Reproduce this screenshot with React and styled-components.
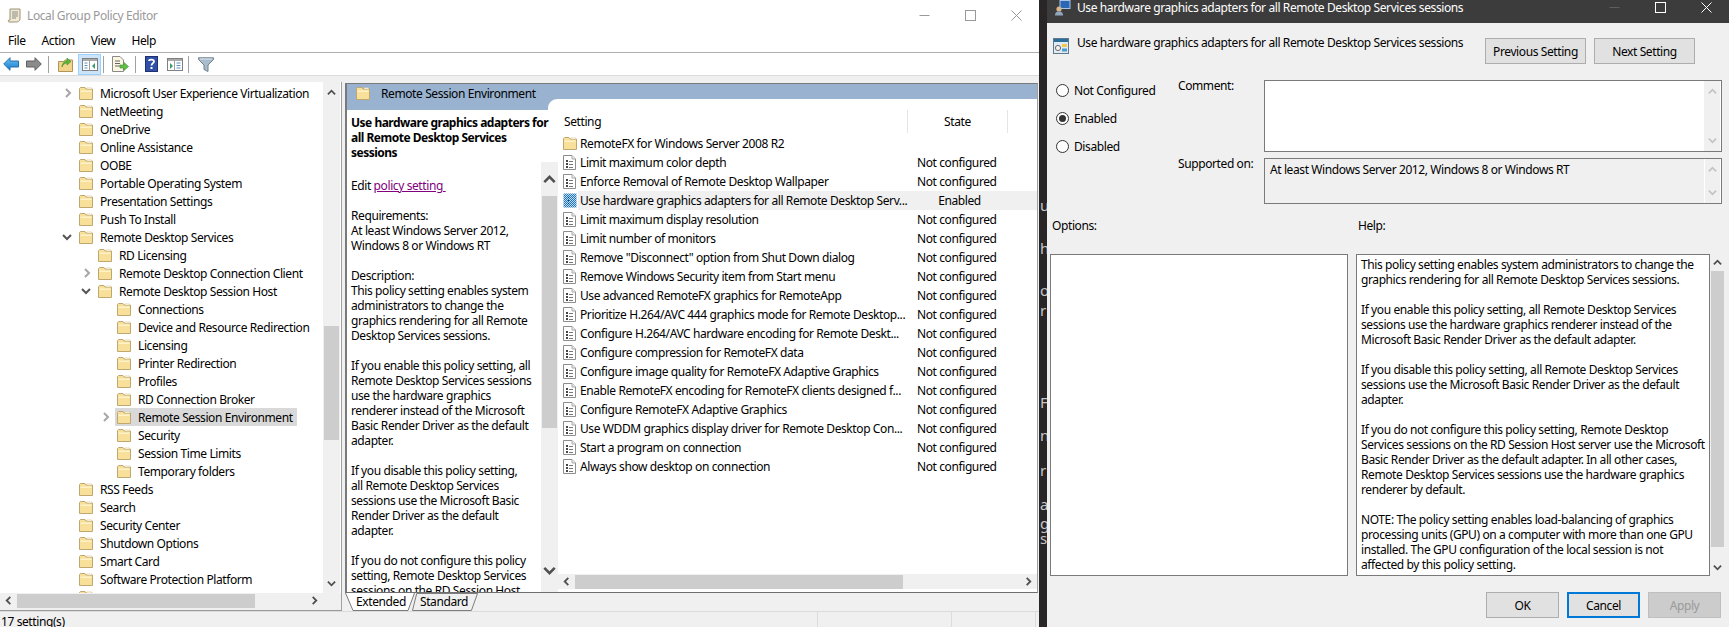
import React from 'react';
import styled, { createGlobalStyle } from 'styled-components';

const GlobalStyle = createGlobalStyle`
  html, body {
    margin: 0;
    background: #2a2526;
    overflow: hidden;
  }
  * {
    box-sizing: border-box;
  }
`;

// tree data: level, name, chevron ('open' | 'closed')
const treeItems = [
  { level: 0, name: 'Microsoft User Experience Virtualization', chevron: 'closed' },
  { level: 0, name: 'NetMeeting' },
  { level: 0, name: 'OneDrive' },
  { level: 0, name: 'Online Assistance' },
  { level: 0, name: 'OOBE' },
  { level: 0, name: 'Portable Operating System' },
  { level: 0, name: 'Presentation Settings' },
  { level: 0, name: 'Push To Install' },
  { level: 0, name: 'Remote Desktop Services', chevron: 'open' },
  { level: 1, name: 'RD Licensing' },
  { level: 1, name: 'Remote Desktop Connection Client', chevron: 'closed' },
  { level: 1, name: 'Remote Desktop Session Host', chevron: 'open' },
  { level: 2, name: 'Connections' },
  { level: 2, name: 'Device and Resource Redirection' },
  { level: 2, name: 'Licensing' },
  { level: 2, name: 'Printer Redirection' },
  { level: 2, name: 'Profiles' },
  { level: 2, name: 'RD Connection Broker' },
  { level: 2, name: 'Remote Session Environment', chevron: 'closed', selected: true },
  { level: 2, name: 'Security' },
  { level: 2, name: 'Session Time Limits' },
  { level: 2, name: 'Temporary folders' },
  { level: 0, name: 'RSS Feeds' },
  { level: 0, name: 'Search' },
  { level: 0, name: 'Security Center' },
  { level: 0, name: 'Shutdown Options' },
  { level: 0, name: 'Smart Card' },
  { level: 0, name: 'Software Protection Platform' },
  { level: 0, name: '' },
];

const settings = [
  { name: 'RemoteFX for Windows Server 2008 R2', state: '', folder: true },
  { name: 'Limit maximum color depth', state: 'Not configured' },
  { name: 'Enforce Removal of Remote Desktop Wallpaper', state: 'Not configured' },
  { name: 'Use hardware graphics adapters for all Remote Desktop Serv...', state: 'Enabled', selected: true },
  { name: 'Limit maximum display resolution', state: 'Not configured' },
  { name: 'Limit number of monitors', state: 'Not configured' },
  { name: 'Remove "Disconnect" option from Shut Down dialog', state: 'Not configured' },
  { name: 'Remove Windows Security item from Start menu', state: 'Not configured' },
  { name: 'Use advanced RemoteFX graphics for RemoteApp', state: 'Not configured' },
  { name: 'Prioritize H.264/AVC 444 graphics mode for Remote Desktop...', state: 'Not configured' },
  { name: 'Configure H.264/AVC hardware encoding for Remote Deskt...', state: 'Not configured' },
  { name: 'Configure compression for RemoteFX data', state: 'Not configured' },
  { name: 'Configure image quality for RemoteFX Adaptive Graphics', state: 'Not configured' },
  { name: 'Enable RemoteFX encoding for RemoteFX clients designed f...', state: 'Not configured' },
  { name: 'Configure RemoteFX Adaptive Graphics', state: 'Not configured' },
  { name: 'Use WDDM graphics display driver for Remote Desktop Con...', state: 'Not configured' },
  { name: 'Start a program on connection', state: 'Not configured' },
  { name: 'Always show desktop on connection', state: 'Not configured' },
];

const descLines = [
  'Requirements:',
  'At least Windows Server 2012,',
  'Windows 8 or Windows RT',
  '',
  'Description:',
  'This policy setting enables system',
  'administrators to change the',
  'graphics rendering for all Remote',
  'Desktop Services sessions.',
  '',
  'If you enable this policy setting, all',
  'Remote Desktop Services sessions',
  'use the hardware graphics',
  'renderer instead of the Microsoft',
  'Basic Render Driver as the default',
  'adapter.',
  '',
  'If you disable this policy setting,',
  'all Remote Desktop Services',
  'sessions use the Microsoft Basic',
  'Render Driver as the default',
  'adapter.',
  '',
  'If you do not configure this policy',
  'setting, Remote Desktop Services',
  'sessions on the RD Session Host',
];

const helpLines = [
  'This policy setting enables system administrators to change the',
  'graphics rendering for all Remote Desktop Services sessions.',
  '',
  'If you enable this policy setting, all Remote Desktop Services',
  'sessions use the hardware graphics renderer instead of the',
  'Microsoft Basic Render Driver as the default adapter.',
  '',
  'If you disable this policy setting, all Remote Desktop Services',
  'sessions use the Microsoft Basic Render Driver as the default',
  'adapter.',
  '',
  'If you do not configure this policy setting, Remote Desktop',
  'Services sessions on the RD Session Host server use the Microsoft',
  'Basic Render Driver as the default adapter. In all other cases,',
  'Remote Desktop Services sessions use the hardware graphics',
  'renderer by default.',
  '',
  'NOTE: The policy setting enables load-balancing of graphics',
  'processing units (GPU) on a computer with more than one GPU',
  'installed. The GPU configuration of the local session is not',
  'affected by this policy setting.',
];

const stripGlyphs = [
  { top: 196, text: 'us' },
  { top: 239, text: 'h' },
  { top: 281, text: 'oi' },
  { top: 301, text: 'r' },
  { top: 393, text: 'F' },
  { top: 426, text: 'na' },
  { top: 461, text: 'r' },
  { top: 495, text: 'a' },
  { top: 514, text: 'g' },
  { top: 529, text: 's' },
];

/* ---------- drawings ---------- */

function FolderIcon() {
  return (
    <svg width="14" height="13" viewBox="0 0 14 13" style={{ flex: 'none' }}>
      <path d="M.5 12.5V1.5L1.5.5H6L7 2H13.5V12.5Z" fill="#f8e09a" stroke="#bfa86f" />
      <path d="M1.5 3.5H12.5V5H1.5Z" fill="#fdf2c8" />
      <path d="M8 .8H12.5V2H8Z" fill="#fff" stroke="#d5c79c" strokeWidth=".5" />
    </svg>
  );
}

function PolicyIcon({ selected }) {
  if (selected) {
    return (
      <svg width="14" height="15" viewBox="0 0 14 15" style={{ flex: 'none' }}>
        <defs>
          <pattern id="dither" width="2" height="2" patternUnits="userSpaceOnUse">
            <rect width="2" height="2" fill="#1f74bb" />
            <rect width="1" height="1" fill="#bcdcf2" />
            <rect x="1" y="1" width="1" height="1" fill="#bcdcf2" />
          </pattern>
        </defs>
        <rect x="0.5" y="0.5" width="13" height="14" fill="url(#dither)" />
        <path d="M5 4h1v1H5zM5 7h1v1H5zM5 10h1v1H5z" fill="#10365c" />
      </svg>
    );
  }
  return (
    <svg width="13" height="15" viewBox="0 0 13 15" style={{ flex: 'none' }}>
      <path d="M.5.5H9L12.5 4V14.5H.5Z" fill="#fff" stroke="#8d8d8d" />
      <path d="M9 .5V4H12.5" fill="#eee" stroke="#a8a8a8" />
      <path d="M3 5h2v2H3zM3 8h2v2H3zM3 11h2v2H3z" fill="#444" />
      <path d="M6 6h4v1H6zM6 9h4v1H6zM6 12h4v1H6z" fill="#777" />
    </svg>
  );
}

function Chevron({ dir = 'down', color = '#505050', size = 9, weight = 2 }) {
  const turn = { down: 0, up: 180, left: 90, right: -90 }[dir];
  return (
    <svg
      width={size}
      height={size}
      viewBox="0 0 10 10"
      style={{ transform: `rotate(${turn}deg)`, flex: 'none', display: 'block' }}
    >
      <path d="M1 3L5 7L9 3" fill="none" stroke={color} strokeWidth={weight} />
    </svg>
  );
}

function AppIcon() {
  return (
    <svg width="15" height="15" viewBox="0 0 15 15">
      <path d="M3 1H13V11C13 13 11 14 9 14H2C1 14 1 12 2 12H3Z" fill="#f1ead2" stroke="#9a927a" />
      <path d="M5 4H11M5 6H11M5 8H11M5 10H9" stroke="#8a8a8a" />
    </svg>
  );
}

function BackIcon() {
  return (
    <svg width="16" height="14" viewBox="0 0 16 14" style={{ display: 'block' }}>
      <defs>
        <linearGradient id="back" x1="0" y1="0" x2="0" y2="1">
          <stop offset="0" stopColor="#6cc4f5" />
          <stop offset="1" stopColor="#1479cf" />
        </linearGradient>
      </defs>
      <path d="M.7 7L7 .7V4H15.5V10H7V13.3Z" fill="url(#back)" stroke="#2c6fa8" />
    </svg>
  );
}

function ForwardIcon() {
  return (
    <svg width="16" height="14" viewBox="0 0 16 14" style={{ display: 'block' }}>
      <path d="M15.3 7L9 .7V4H.5V10H9V13.3Z" fill="#8b8b8b" stroke="#5f5f5f" />
    </svg>
  );
}

function UpFolderIcon() {
  return (
    <svg width="15" height="17" viewBox="0 0 15 17" style={{ display: 'block' }}>
      <path d="M.5 15.5V5.5H6L7 4H14.5V15.5Z" fill="#f2d48a" stroke="#b0955a" />
      <path d="M4 11C4 7 7 5 9 5V2L13 5.5L9 9V7C7 7 5 8 4 11Z" fill="#5db53d" stroke="#3f8f2c" strokeWidth=".6" />
    </svg>
  );
}

function PaneIcon({ accent = '#3c9c64', flip }) {
  return (
    <svg width="16" height="13" viewBox="0 0 16 13" style={{ display: 'block' }}>
      <rect x=".5" y=".5" width="15" height="12" fill="#fff" stroke="#7f7f7f" />
      <rect x="1" y="1" width="14" height="2" fill="#a9a9a9" />
      <path d="M7.5 3V12.5" stroke="#9d9d9d" />
      {flip ? (
        <>
          <path d="M3 5L6 8L3 11Z" fill={accent} />
          <path d="M9.5 5H13.5M9.5 7.5H13.5M9.5 10H13.5" stroke="#5b8fc4" />
        </>
      ) : (
        <>
          <path d="M2.5 5H5.5M2.5 7.5H5.5M2.5 10H5.5" stroke="#5b8fc4" />
          <path d="M13 5L10 8L13 11Z" fill={accent} />
        </>
      )}
    </svg>
  );
}

function ExportIcon() {
  return (
    <svg width="17" height="16" viewBox="0 0 17 16" style={{ display: 'block' }}>
      <path d="M.5.5H8L11.5 4V15.5H.5Z" fill="#fbf6e2" stroke="#8a8a8a" />
      <path d="M3 5H8M3 7.5H8M3 10H8" stroke="#666" />
      <path d="M8 9H12V6.5L16.5 10.5L12 14.5V12H8Z" fill="#62c049" stroke="#3e9430" strokeWidth=".6" />
    </svg>
  );
}

function HelpIcon() {
  return (
    <svg width="13" height="16" viewBox="0 0 13 16" style={{ display: 'block' }}>
      <rect x=".5" y=".5" width="12" height="15" fill="#2f4fa8" stroke="#1f2f70" />
      <path d="M4 5C4 3 9 3 9 5.5C9 7 6.5 7.5 6.5 9.5" fill="none" stroke="#fff" strokeWidth="1.8" />
      <rect x="5.5" y="11" width="2" height="2" fill="#fff" />
    </svg>
  );
}

function FilterIcon() {
  return (
    <svg width="16" height="15" viewBox="0 0 16 15" style={{ display: 'block' }}>
      <path d="M.5.8H15.5V2.5L10 8V14.5L6 12.5V8L.5 2.5Z" fill="#a9bccb" stroke="#71808e" />
      <path d="M2 1.5H14V2.5H2Z" fill="#dbe6ef" />
    </svg>
  );
}

function DialogTitleIcon() {
  return (
    <svg width="16" height="16" viewBox="0 0 16 16" style={{ flex: 'none' }}>
      <rect x="5" y="0.5" width="10" height="8" fill="#2b67b5" stroke="#a7c4e8" />
      <circle cx="4" cy="9" r="2.6" fill="#d6b48c" />
      <path d="M0 15.5C0 12 2 11.5 4 11.5S8 12 8 15.5Z" fill="#8fa6bd" />
    </svg>
  );
}

function SettingIcon() {
  return (
    <svg width="16" height="16" viewBox="0 0 16 16" style={{ flex: 'none' }}>
      <rect x=".5" y=".5" width="15" height="15" fill="#dfeaf3" stroke="#5d7a8f" />
      <rect x="1" y="1" width="14" height="3" fill="#2d6d9a" />
      <circle cx="5" cy="10" r="2.6" fill="#f2f2f2" stroke="#6b6b6b" />
      <rect x="9" y="6" width="5" height="3" fill="#f0c850" />
      <rect x="9" y="10.5" width="5" height="3" fill="#4a9bd0" />
    </svg>
  );
}

function MinimizeGlyph({ color }) {
  return (
    <svg width="11" height="11" viewBox="0 0 11 11">
      <path d="M.5 5.5H10.5" stroke={color} />
    </svg>
  );
}

function MaximizeGlyph({ color }) {
  return (
    <svg width="11" height="11" viewBox="0 0 11 11">
      <rect x=".5" y=".5" width="10" height="10" fill="none" stroke={color} />
    </svg>
  );
}

function CloseGlyph({ color }) {
  return (
    <svg width="11" height="11" viewBox="0 0 11 11">
      <path d="M.5 .5L10.5 10.5M10.5 .5L.5 10.5" stroke={color} />
    </svg>
  );
}

function TabShape({ d, fill }) {
  return (
    <TabOutline viewBox="0 0 70 18" preserveAspectRatio="none">
      <path d={d} fill={fill} stroke="#7a7a7a" />
    </TabOutline>
  );
}

/* ---------- scrollbars ---------- */

function VScrollBar({ width = 17, arrowSize = 9, arrowBox = 17, bottom = 0, thumbTop, thumbHeight, offsetTop = 0 }) {
  return (
    <VBar $width={width} $top={offsetTop} $bottom={bottom}>
      <ArrowBox $height={arrowBox}>
        <Chevron dir="up" size={arrowSize} />
      </ArrowBox>
      <VTrack>
        <VThumb $top={thumbTop} $height={thumbHeight} />
      </VTrack>
      <ArrowBox $height={arrowBox}>
        <Chevron dir="down" size={arrowSize} />
      </ArrowBox>
    </VBar>
  );
}

function HScrollBar({ thumbLeft, thumbWidth }) {
  return (
    <HBar>
      <HArrow>
        <Chevron dir="left" />
      </HArrow>
      <HTrack>
        <HThumb $left={thumbLeft} $width={thumbWidth} />
      </HTrack>
      <HArrow>
        <Chevron dir="right" />
      </HArrow>
    </HBar>
  );
}

function App() {
  return (
    <>
      <GlobalStyle />
      <Desktop>
        <Editor>
          <TitleBar>
            <AppIcon />
            <WindowTitle>Local Group Policy Editor</WindowTitle>
            <WindowControls>
              <ControlButton><MinimizeGlyph color="#999" /></ControlButton>
              <ControlButton><MaximizeGlyph color="#999" /></ControlButton>
              <ControlButton><CloseGlyph color="#999" /></ControlButton>
            </WindowControls>
          </TitleBar>

          <MenuBar>
            <span>File</span>
            <span>Action</span>
            <span>View</span>
            <span>Help</span>
          </MenuBar>

          <Toolbar>
            <ToolItem $ml={3}><BackIcon /></ToolItem>
            <ToolItem $ml={7}><ForwardIcon /></ToolItem>
            <ToolSeparator $ml={6} />
            <ToolItem $ml={9}><UpFolderIcon /></ToolItem>
            <ToolToggle><PaneIcon /></ToolToggle>
            <ToolSeparator $ml={2} />
            <ToolItem $ml={8}><ExportIcon /></ToolItem>
            <ToolSeparator $ml={6} />
            <ToolItem $ml={9}><HelpIcon /></ToolItem>
            <ToolItem $ml={9}><PaneIcon flip /></ToolItem>
            <ToolSeparator $ml={5} />
            <ToolItem $ml={9}><FilterIcon /></ToolItem>
          </Toolbar>

          <Body>
            <TreePane>
              <TreeArea>
                <TreeList>
                  {treeItems.map((item, i) => (
                    <TreeRow key={i} $level={item.level}>
                      <ChevronSlot>
                        {item.chevron === 'open' && <Chevron dir="down" color="#555" size={10} />}
                        {item.chevron === 'closed' && <ChevronRight><Chevron dir="right" color="#a6a6a6" size={10} /></ChevronRight>}
                      </ChevronSlot>
                      <TreeLabel $selected={item.selected}>
                        <FolderIcon />
                        <span>{item.name}</span>
                      </TreeLabel>
                    </TreeRow>
                  ))}
                </TreeList>
                <VScrollBar offsetTop={2} thumbTop={225} thumbHeight={114} bottom={1} />
              </TreeArea>
              <TreeHScroll>
                <HScrollBar thumbLeft={0} thumbWidth={238} />
              </TreeHScroll>
            </TreePane>

            <RightColumn>
              <DetailPane>
                <Banner>
                  <BannerLabel>
                    <FolderIcon />
                    <span>Remote Session Environment</span>
                  </BannerLabel>
                  <BannerSheet />
                </Banner>
                <DetailBody>
                  <Description>
                    <DescTitle>
                      Use hardware graphics adapters for<br />
                      all Remote Desktop Services<br />
                      sessions
                    </DescTitle>
                    <EditLine>
                      Edit <PolicyLink>policy setting&nbsp;</PolicyLink>
                    </EditLine>
                    {descLines.map((line, i) => (
                      <TextLine key={i}>{line}</TextLine>
                    ))}
                  </Description>
                  <VScrollBar
                    offsetTop={52}
                    bottom={5}
                    arrowBox={34}
                    arrowSize={13}
                    thumbTop={0}
                    thumbHeight={232}
                  />
                  <SettingsColumn>
                    <SettingsHeader>
                      <SettingHead>Setting</SettingHead>
                      <StateHead>State</StateHead>
                    </SettingsHeader>
                    <SettingsList>
                      {settings.map((s, i) => (
                        <SettingRow key={i}>
                          <SettingIconSlot>
                            {s.folder ? <FolderIcon /> : <PolicyIcon selected={s.selected} />}
                          </SettingIconSlot>
                          <SettingCells $selected={s.selected}>
                            <SettingName>{s.name}</SettingName>
                            <SettingState $center={s.selected}>{s.state}</SettingState>
                          </SettingCells>
                        </SettingRow>
                      ))}
                    </SettingsList>
                    <HScrollBar thumbLeft={0} thumbWidth={328} />
                    <ListFoot />
                  </SettingsColumn>
                </DetailBody>
              </DetailPane>
              <TabStrip>
                <Tab $width={70} $pad={11} $active>
                  <TabShape d="M.5 0L8 17.5H63L69.5 0" fill="#fff" />
                  <TabLabel>Extended</TabLabel>
                </Tab>
                <Tab $width={66} $pad={8} $ml={-3}>
                  <TabShape d="M.5 17.5L5 .5H69.5L63 17.5Z" fill="#f0f0f0" />
                  <TabLabel>Standard</TabLabel>
                </Tab>
              </TabStrip>
            </RightColumn>
          </Body>

          <StatusBar>
            <StatusCell $width={818}>17 setting(s)</StatusCell>
            <StatusCell $width={134} />
            <StatusCell $width={84} />
          </StatusBar>
        </Editor>

        <BackStrip>
          {stripGlyphs.map((g) => (
            <StripGlyph key={g.top} style={{ top: g.top }}>{g.text}</StripGlyph>
          ))}
        </BackStrip>

        <Dialog>
          <DialogTitleBar>
            <DialogTitleIcon />
            <DialogCaption>Use hardware graphics adapters for all Remote Desktop Services sessions</DialogCaption>
            <DialogControls>
              <DialogControl><MinimizeGlyph color="#5e5e5e" /></DialogControl>
              <DialogControl><MaximizeGlyph color="#fff" /></DialogControl>
              <DialogControl><CloseGlyph color="#fff" /></DialogControl>
            </DialogControls>
          </DialogTitleBar>

          <DialogHead>
            <SettingIcon />
            <DialogHeading>Use hardware graphics adapters for all Remote Desktop Services sessions</DialogHeading>
            <NavButtons>
              <DialogButton $width={101}>Previous Setting</DialogButton>
              <DialogButton $width={101}>Next Setting</DialogButton>
            </NavButtons>
          </DialogHead>

          <StateSection>
            <RadioColumn>
              <RadioRow><RadioMark /><span>Not Configured</span></RadioRow>
              <RadioRow><RadioMark $checked /><span>Enabled</span></RadioRow>
              <RadioRow><RadioMark /><span>Disabled</span></RadioRow>
            </RadioColumn>
            <FieldGrid>
              <FieldLabel>Comment:</FieldLabel>
              <FieldBox $white>
                <FieldText />
                <FieldScroll>
                  <Chevron dir="up" color="#c4c4c4" />
                  <Chevron dir="down" color="#c4c4c4" />
                </FieldScroll>
              </FieldBox>
              <FieldLabel>Supported on:</FieldLabel>
              <FieldBox>
                <FieldText>At least Windows Server 2012, Windows 8 or Windows RT</FieldText>
                <FieldScroll $divided>
                  <Chevron dir="up" color="#c4c4c4" />
                  <Chevron dir="down" color="#c4c4c4" />
                </FieldScroll>
              </FieldBox>
            </FieldGrid>
          </StateSection>

          <PanelLabels>
            <OptionsLabel>Options:</OptionsLabel>
            <span>Help:</span>
          </PanelLabels>

          <Panels>
            <OptionsBox />
            <HelpBox>
              {helpLines.map((line, i) => (
                <TextLine key={i}>{line}</TextLine>
              ))}
            </HelpBox>
            <VScrollBar width={15} thumbTop={0} thumbHeight={276} />
          </Panels>

          <DialogFooter>
            <DialogButton $width={73}>OK</DialogButton>
            <DialogButton $width={73} $default>Cancel</DialogButton>
            <DialogButton $width={73} $disabled>Apply</DialogButton>
          </DialogFooter>
        </Dialog>
      </Desktop>
    </>
  );
}

export default App;

const UI_FONT = '"Noto Sans", "Liberation Sans", sans-serif';

const Desktop = styled.div`
  display: flex;
  width: 1729px;
  height: 627px;
  overflow: hidden;
  font-family: ${UI_FONT};
  font-size: 12px;
  letter-spacing: -0.4px;
  line-height: 15px;
  color: #000;
`;

const Editor = styled.div`
  flex: none;
  width: 1039px;
  height: 627px;
  display: flex;
  flex-direction: column;
  background: #f0f0f0;
  overflow: hidden;
`;

const TitleBar = styled.div`
  flex: none;
  height: 30px;
  padding-left: 7px;
  display: flex;
  align-items: center;
  background: #fff;
`;

const WindowTitle = styled.span`
  margin-left: 5px;
  color: #999;
`;

const WindowControls = styled.div`
  margin-left: auto;
  display: flex;
`;

const ControlButton = styled.div`
  width: 46px;
  height: 28px;
  display: flex;
  align-items: center;
  justify-content: center;
`;

const MenuBar = styled.div`
  flex: none;
  height: 23px;
  padding: 0 0 2px 8px;
  display: flex;
  align-items: center;
  gap: 16px;
  background: #fff;
  border-bottom: 1px solid #b0b0b0;
`;

const Toolbar = styled.div`
  flex: none;
  height: 23px;
  display: flex;
  align-items: center;
  background: #fff;
  border-bottom: 1px solid #dcdcdc;
`;

const ToolItem = styled.div`
  margin-left: ${(p) => p.$ml}px;
`;

const ToolToggle = styled.div`
  margin-left: 5px;
  width: 23px;
  height: 21px;
  display: flex;
  align-items: center;
  justify-content: center;
  background: #cce4f7;
  border: 1px solid #99d1ff;
`;

const ToolSeparator = styled.div`
  margin-left: ${(p) => p.$ml}px;
  width: 1px;
  height: 17px;
  background: #a0a0a0;
`;

const Body = styled.div`
  flex: none;
  height: 529px;
  margin-top: 6px;
  display: flex;
`;

const TreePane = styled.div`
  flex: none;
  width: 342px;
  height: 529px;
  display: flex;
  flex-direction: column;
  border-right: 1px solid #a0a0a0;
  border-bottom: 1px solid #999;
`;

const TreeArea = styled.div`
  flex: none;
  height: 511px;
  display: flex;
  background: #fff;
  overflow: hidden;
`;

const TreeList = styled.div`
  width: 323px;
  padding-top: 2px;
  overflow: hidden;
`;

const TreeRow = styled.div`
  height: 18px;
  padding-left: ${(p) => 62 + p.$level * 19}px;
  display: flex;
  align-items: center;
  white-space: nowrap;
`;

const ChevronSlot = styled.div`
  flex: none;
  width: 17px;
  display: flex;
  align-items: center;
`;

const ChevronRight = styled.div`
  margin-left: 1px;
`;

const TreeLabel = styled.div`
  height: 18px;
  margin-left: ${(p) => (p.$selected ? '-2px' : '0')};
  padding: 0 4px 0 ${(p) => (p.$selected ? '2px' : '0')};
  display: flex;
  align-items: center;
  gap: 7px;
  background: ${(p) => (p.$selected ? '#d9d9d9' : 'transparent')};
`;

const TreeHScroll = styled.div`
  flex: none;
  width: 323px;
`;

const VBar = styled.div`
  flex: none;
  width: ${(p) => p.$width}px;
  margin-top: ${(p) => p.$top}px;
  margin-bottom: ${(p) => p.$bottom}px;
  display: flex;
  flex-direction: column;
  background: #f0f0f0;
  box-shadow: 0 ${(p) => p.$bottom}px 0 #f0f0f0, 0 -${(p) => (p.$top === 2 ? 2 : 0)}px 0 #f0f0f0;
`;

const ArrowBox = styled.div`
  flex: none;
  height: ${(p) => p.$height}px;
  display: flex;
  align-items: center;
  justify-content: center;
`;

const VTrack = styled.div`
  flex: 1;
  min-height: 0;
  padding: 0 1px;
`;

const VThumb = styled.div`
  margin-top: ${(p) => p.$top}px;
  height: ${(p) => p.$height}px;
  background: #cdcdcd;
`;

const HBar = styled.div`
  flex: none;
  height: 15px;
  display: flex;
  background: #f0f0f0;
`;

const HArrow = styled.div`
  flex: none;
  width: 17px;
  display: flex;
  align-items: center;
  justify-content: center;
`;

const HTrack = styled.div`
  flex: 1;
  padding: 1px 0 0;
`;

const HThumb = styled.div`
  margin-left: ${(p) => p.$left}px;
  width: ${(p) => p.$width}px;
  height: 14px;
  background: #cdcdcd;
`;

const RightColumn = styled.div`
  flex: 1;
  margin-left: 3px;
  display: flex;
  flex-direction: column;
`;

const DetailPane = styled.div`
  flex: none;
  width: 693px;
  height: 510px;
  margin-top: 1px;
  display: flex;
  flex-direction: column;
  background: #fff;
  border-top: 1px solid #7a7a7a;
  border-left: 2px solid #7a7a7a;
  border-right: 1px solid #a0a0a0;
  border-bottom: 1px solid #6f6f6f;
`;

const Banner = styled.div`
  flex: none;
  height: 26px;
  display: flex;
  background: #98b2cf;
`;

const BannerLabel = styled.div`
  flex: none;
  width: 201px;
  height: 15px;
  margin-top: 2px;
  padding-left: 9px;
  display: flex;
  align-items: center;
  gap: 11px;
`;

const BannerSheet = styled.div`
  flex: 1;
  margin-top: 15px;
  background: #fff;
  border-top-left-radius: 9px;
`;

const DetailBody = styled.div`
  flex: 1;
  min-height: 0;
  display: flex;
  overflow: hidden;
`;

const Description = styled.div`
  flex: none;
  width: 194px;
  padding: 5px 0 0 4px;
  white-space: nowrap;
`;

const DescTitle = styled.div`
  font-weight: 700;
  letter-spacing: -0.5px;
`;

const EditLine = styled.div`
  margin: 18px 0 15px;
`;

const PolicyLink = styled.span`
  color: #800080;
  text-decoration: underline;
`;

const TextLine = styled.div`
  height: 15px;
  white-space: nowrap;
`;

const SettingsColumn = styled.div`
  flex: 1;
  min-width: 0;
  display: flex;
  flex-direction: column;
`;

const SettingsHeader = styled.div`
  flex: none;
  height: 24px;
  display: flex;
  align-items: flex-start;
`;

const SettingHead = styled.div`
  width: 350px;
  height: 23px;
  padding: 4px 0 0 6px;
  border-right: 1px solid #e5e5e5;
`;

const StateHead = styled.div`
  width: 100px;
  height: 23px;
  padding-top: 4px;
  text-align: center;
  border-right: 1px solid #e5e5e5;
`;

const SettingsList = styled.div`
  flex: 1;
  min-height: 0;
`;

const SettingRow = styled.div`
  height: 19px;
  display: flex;
  align-items: center;
`;

const SettingIconSlot = styled.div`
  flex: none;
  width: 20px;
  padding-left: 5px;
  display: flex;
`;

const SettingCells = styled.div`
  flex: 1;
  height: 19px;
  padding-left: 2px;
  display: flex;
  align-items: center;
  background: ${(p) => (p.$selected ? '#f0f0f0' : 'transparent')};
`;

const SettingName = styled.div`
  flex: none;
  width: 337px;
  white-space: nowrap;
  overflow: hidden;
`;

const SettingState = styled.div`
  flex: none;
  width: ${(p) => (p.$center ? '85px' : 'auto')};
  text-align: ${(p) => (p.$center ? 'center' : 'left')};
  white-space: nowrap;
`;

const ListFoot = styled.div`
  flex: none;
  height: 3px;
`;

const TabStrip = styled.div`
  flex: none;
  height: 18px;
  display: flex;
  background: #f0f0f0;
`;

const Tab = styled.div`
  position: relative;
  flex: none;
  width: ${(p) => p.$width}px;
  margin-left: ${(p) => p.$ml || 0}px;
  padding-left: ${(p) => p.$pad}px;
  z-index: ${(p) => (p.$active ? 1 : 0)};
`;

const TabOutline = styled.svg`
  position: absolute;
  inset: 0;
  width: 100%;
  height: 100%;
`;

const TabLabel = styled.span`
  position: relative;
  line-height: 18px;
`;

const StatusBar = styled.div`
  flex: none;
  height: 16px;
  display: flex;
  border-top: 1px solid #dcdcdc;
`;

const StatusCell = styled.div`
  flex: none;
  width: ${(p) => p.$width}px;
  padding: 2px 0 0 1px;
  border-right: 1px solid #dcdcdc;
`;

const BackStrip = styled.div`
  position: relative;
  flex: none;
  width: 8px;
  height: 627px;
  overflow: hidden;
  background: #2a2526;
`;

const StripGlyph = styled.span`
  position: absolute;
  left: 1px;
  font-size: 15px;
  line-height: 18px;
  color: #c9c6c6;
  white-space: nowrap;
`;

const Dialog = styled.div`
  flex: 1;
  min-width: 0;
  height: 627px;
  display: flex;
  flex-direction: column;
  background: #f0f0f0;
`;

const DialogTitleBar = styled.div`
  flex: none;
  height: 23px;
  padding-left: 8px;
  display: flex;
  align-items: flex-start;
  background: #3c3c3c;
  color: #fff;
  overflow: hidden;
`;

const DialogCaption = styled.span`
  margin: 0 0 0 6px;
`;

const DialogControls = styled.div`
  margin-left: auto;
  display: flex;
`;

const DialogControl = styled.div`
  width: 46px;
  height: 14px;
  display: flex;
  align-items: center;
  justify-content: center;
`;

const DialogHead = styled.div`
  flex: none;
  height: 26px;
  margin-top: 15px;
  padding: 0 34px 0 6px;
  display: flex;
`;

const DialogHeading = styled.span`
  margin: -3px 0 0 8px;
  height: 15px;
  white-space: nowrap;
`;

const NavButtons = styled.div`
  margin-left: auto;
  display: flex;
  gap: 8px;
`;

const DialogButton = styled.div`
  flex: none;
  width: ${(p) => p.$width}px;
  height: 26px;
  display: flex;
  align-items: center;
  justify-content: center;
  background: ${(p) => (p.$disabled ? '#cccccc' : '#e1e1e1')};
  border: ${(p) => (p.$default ? '2px solid #0078d7' : p.$disabled ? '1px solid #bfbfbf' : '1px solid #adadad')};
  color: ${(p) => (p.$disabled ? '#9a9a9a' : '#000')};
`;

const StateSection = styled.div`
  flex: none;
  height: 124px;
  margin-top: 16px;
  display: flex;
`;

const RadioColumn = styled.div`
  flex: none;
  width: 131px;
  padding: 4px 0 0 9px;
  display: flex;
  flex-direction: column;
  gap: 15px;
`;

const RadioRow = styled.div`
  height: 13px;
  display: flex;
  align-items: center;
  gap: 5px;
  white-space: nowrap;
`;

const RadioMark = styled.span`
  flex: none;
  position: relative;
  width: 13px;
  height: 13px;
  border: 1px solid #333;
  border-radius: 50%;
  background: #fff;
  &::after {
    content: '';
    display: ${(p) => (p.$checked ? 'block' : 'none')};
    position: absolute;
    inset: 2px;
    border-radius: 50%;
    background: #333;
  }
`;

const FieldGrid = styled.div`
  display: grid;
  grid-template-columns: 86px 458px;
  grid-template-rows: 72px 46px;
  row-gap: 6px;
`;

const FieldLabel = styled.div`
  margin-top: -2px;
`;

const FieldBox = styled.div`
  display: flex;
  border: 1px solid #7a7a7a;
  background: ${(p) => (p.$white ? '#fff' : '#f0f0f0')};
`;

const FieldText = styled.div`
  flex: 1;
  padding: 3px 0 0 5px;
  white-space: nowrap;
`;

const FieldScroll = styled.div`
  flex: none;
  width: 17px;
  padding: 6px 0;
  display: flex;
  flex-direction: column;
  align-items: center;
  justify-content: space-between;
  background: #f0f0f0;
  border-left: ${(p) => (p.$divided ? '1px solid #fff' : 'none')};
  border-right: 1px solid #fff;
`;

const PanelLabels = styled.div`
  flex: none;
  height: 15px;
  margin-top: 14px;
  padding-left: 5px;
  display: flex;
`;

const OptionsLabel = styled.span`
  width: 306px;
`;

const Panels = styled.div`
  flex: none;
  height: 322px;
  margin-top: 21px;
  padding-left: 3px;
  display: flex;
`;

const OptionsBox = styled.div`
  flex: none;
  width: 298px;
  background: #fff;
  border: 1px solid #7a7a7a;
`;

const HelpBox = styled.div`
  flex: none;
  width: 354px;
  margin-left: 8px;
  padding: 2px 0 0 4px;
  background: #fff;
  border: 1px solid #7a7a7a;
`;

const DialogFooter = styled.div`
  flex: none;
  margin-top: 16px;
  padding-right: 8px;
  display: flex;
  justify-content: flex-end;
  gap: 8px;
`;
